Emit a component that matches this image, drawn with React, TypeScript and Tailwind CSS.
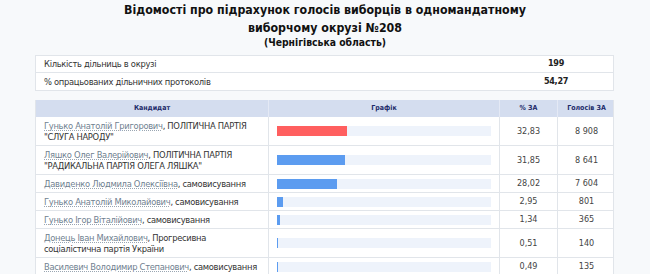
const rows = [
  { name: "Гунько Анатолій Григорович", party: "ПОЛІТИЧНА ПАРТІЯ \"СЛУГА НАРОДУ\"", pct: 32.83, votes: "8 908", red: true },
  { name: "Ляшко Олег Валерійович", party: "ПОЛІТИЧНА ПАРТІЯ \"РАДИКАЛЬНА ПАРТІЯ ОЛЕГА ЛЯШКА\"", pct: 31.85, votes: "8 641" },
  { name: "Давиденко Людмила Олексіївна", party: "самовисування", pct: 28.02, votes: "7 604" },
  { name: "Гунько Анатолій Миколайович", party: "самовисування", pct: 2.95, votes: "801" },
  { name: "Гунько Ігор Віталійович", party: "самовисування", pct: 1.34, votes: "365" },
  { name: "Донець Іван Михайлович", party: "Прогресивна соціалістична партія України", pct: 0.51, votes: "140" },
  { name: "Василевич Володимир Степанович", party: "самовисування", pct: 0.49, votes: "135" },
];

const font = { fontFamily: '"DejaVu Sans Condensed", "DejaVu Sans", sans-serif' };

export default function App() {
  return (
    <div className="w-[650px] h-[274px] overflow-hidden bg-[#f7f9fb] text-[#333]" style={font}>
      <div className="pt-[1px] text-center font-bold text-[#111]">
        <h1 className="text-[12.3px] leading-[18px]">
          Відомості про підрахунок голосів виборців в одномандатному
          <br />
          виборчому окрузі №208
        </h1>
        <p className="text-[10.3px] leading-[10px]">(Чернігівська область)</p>
      </div>

      <div className="ml-[35px] mt-[8px] w-[579px] border border-[#e1e5ea] bg-white text-[9.3px] tracking-[-0.3px]">
        <div className="flex h-[17px] items-center border-b border-[#e1e5ea]">
          <span className="flex-1 pl-[8px]">Кількість дільниць в окрузі</span>
          <span className="w-[114px] text-center text-[9px] font-bold text-[#222]">199</span>
        </div>
        <div className="flex h-[17px] items-center">
          <span className="flex-1 pl-[8px]">% опрацьованих дільничних протоколів</span>
          <span className="w-[114px] text-center text-[9px] font-bold text-[#222]">54,27</span>
        </div>
      </div>

      <div className="ml-[35px] mt-[9px] w-[579px] border-x border-[#e1e5ea] bg-white">
        <div className="grid h-[17px] grid-cols-[232px_231px_58px_58px] bg-[#d4ddef] text-[7px] font-bold text-[#1d2b6a]">
          <div className="flex items-center justify-center">Кандидат</div>
          <div className="flex items-center justify-center border-l border-[#e4e9f5]">Графік</div>
          <div className="flex items-center justify-center border-l border-[#e4e9f5]">% ЗА</div>
          <div className="flex items-center justify-center border-l border-[#e4e9f5]">Голосів ЗА</div>
        </div>
        {rows.map((r) => (
          <div
            key={r.name}
            className="grid grid-cols-[232px_231px_58px_58px] border-b border-[#e1e5ea] text-[9.3px] leading-[11px]"
          >
            <div className="py-[3px] pl-[8px] pr-[4px] tracking-[-0.3px]">
              <span className="text-[#6f7f90] underline decoration-dotted decoration-[#9aa6b2] underline-offset-1">
                {r.name}
              </span>
              , {r.party}
            </div>
            <div className="flex items-center border-l border-[#e1e5ea] px-[8px]">
              <div className="h-[10px] w-full bg-[#eef3fb]">
                <div
                  className={r.red ? "h-full bg-[#ff5f5f]" : "h-full bg-[#5c9cf0]"}
                  style={{ width: `${r.pct}%` }}
                />
              </div>
            </div>
            <div className="flex items-center justify-center border-l border-[#e1e5ea] text-[9px] text-[#444]">
              {r.pct.toFixed(2).replace(".", ",")}
            </div>
            <div className="flex items-center justify-center border-l border-[#e1e5ea] text-[9px] text-[#444]">
              {r.votes}
            </div>
          </div>
        ))}
      </div>
    </div>
  );
}
